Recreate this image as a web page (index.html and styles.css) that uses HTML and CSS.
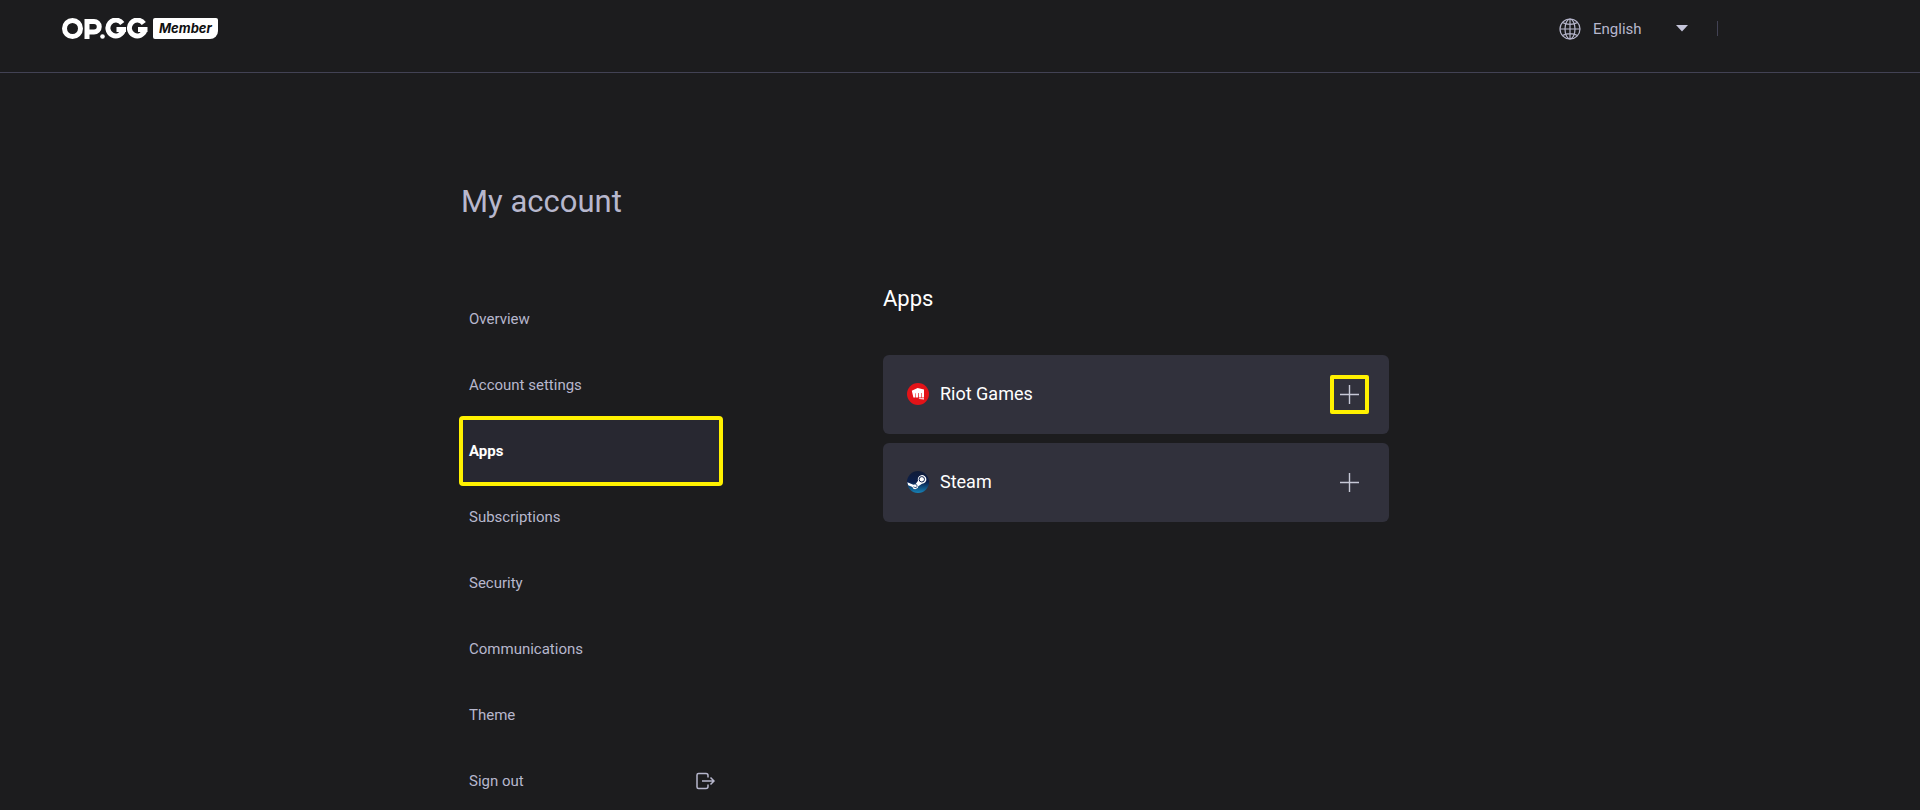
FILE: index.html
```html
<!DOCTYPE html>
<html lang="en">
<head>
<meta charset="utf-8">
<title>My account - OP.GG Member</title>
<meta name="viewport" content="width=device-width, initial-scale=1">
<link rel="stylesheet" href="styles.css">
</head>
<body>
<header class="header">
  <a class="logo" href="#" aria-label="OP.GG Member">
    <svg class="logo-mark" width="87" height="21" viewBox="0 0 87 21" fill="none" stroke="#fff" stroke-width="5" aria-hidden="true">
      <circle cx="10.500" cy="10.500" r="8"/>
      <path d="M25 21V3.500H32a4.700 4.700 0 0 1 0 10.500H27"/>
      <circle cx="40.500" cy="18.500" r="2.300" fill="#fff" stroke="none"/>
      <path d="M60.300 5.500A7.900 7.900 0 1 0 61.500 11.800M64 11.500H54.500"/>
      <path d="M81.800 5.500A7.900 7.900 0 1 0 83 11.800M85.500 11.500H76"/>
    </svg>
    <span class="logo-badge">Member</span>
  </a>
  <div class="header-tools">
    <label class="language">
      <svg width="22" height="22" viewBox="0 0 22 22" fill="none" stroke="#b7b7cd" stroke-width="1.200" aria-hidden="true">
        <circle cx="11" cy="11" r="10"/><ellipse cx="11" cy="11" rx="5" ry="10"/>
        <path d="M11 1v20M1 11h20M3.500 4.500C7.500 7 14.500 7 18.500 4.500M3.500 17.500C7.500 15 14.500 15 18.500 17.500"/>
      </svg>
      <select class="language-select" aria-label="Language"><option>English</option></select>
      <svg width="12" height="7" viewBox="0 0 12 7" aria-hidden="true"><path d="M0 0h12L6 6.500z" fill="#c5c5da"/></svg>
    </label>
  </div>
</header>
<main class="page">
  <h1 class="title">My account</h1>
  <div class="columns">
    <nav class="menu" aria-label="Account">
      <a class="menu-item" href="#">Overview</a>
      <a class="menu-item" href="#">Account settings</a>
      <a class="menu-item menu-item-active" href="#" aria-current="page">Apps</a>
      <a class="menu-item" href="#">Subscriptions</a>
      <a class="menu-item" href="#">Security</a>
      <a class="menu-item" href="#">Communications</a>
      <a class="menu-item" href="#">Theme</a>
      <a class="menu-item menu-item-last" href="#">Sign out
        <svg width="20" height="18" viewBox="0 0 20 18" fill="none" stroke="#b7b7cd" stroke-width="1.500" aria-hidden="true"><path d="M13 5.500V3.500A2 2 0 0 0 11 1.500H3.500A1.500 1.500 0 0 0 2 3v12A1.500 1.500 0 0 0 3.500 16.500H11a2 2 0 0 0 2-2V12.500M7 9H19M15.500 5.500L19 9L15.500 12.500"/></svg>
      </a>
    </nav>
    <section class="apps">
      <h2 class="apps-title">Apps</h2>
      <ul class="app-list">
        <li class="app">
          <svg width="22" height="22" viewBox="0 0 22 22" aria-hidden="true">
            <circle cx="11" cy="11" r="11" fill="#e31318"/>
            <path d="M4.800 7.800L10.600 5L17 6.600V14.500H14.800V10H14.200V14.500H12L11.700 10H11.100L11.200 14.500H9L8.600 10.200H8.100L8.400 14.500H6.400zM11.500 15.200H17V16.500L12.500 15.900z" fill="#fff"/>
          </svg>
          <span class="app-name">Riot Games</span>
          <button class="add add-highlight" type="button" aria-label="Add Riot Games"><svg width="19" height="19" viewBox="0 0 19 19" stroke="#c6c8d6" stroke-width="1.400" aria-hidden="true"><path d="M9.500 0v19M0 9.500h19"/></svg></button>
        </li>
        <li class="app">
          <svg width="22" height="22" viewBox="0 0 22 22" aria-hidden="true">
            <defs><linearGradient id="steam" x1="0" y1="0" x2="0" y2="1"><stop offset="0" stop-color="#101c38"/><stop offset=".5" stop-color="#0b1f4c"/><stop offset="1" stop-color="#1683b8"/></linearGradient></defs>
            <circle cx="11" cy="11" r="11" fill="url(#steam)"/>
            <path d="M.3 11.300L6.400 13.700L8.500 13.200L11 9.800A4.300 4.300 0 1 1 15 12.700L11.300 15.200A3 3 0 0 1 5.400 15.900L1.200 14.200z" fill="#fff"/>
            <circle cx="14.800" cy="8.300" r="2.700" fill="none" stroke="#0b1f4c"/>
            <path d="M6.400 15.800l1.300.6a1.600 1.600 0 1 0 .7-3" fill="none" stroke="#12366a" stroke-width=".8"/>
          </svg>
          <span class="app-name">Steam</span>
          <button class="add" type="button" aria-label="Add Steam"><svg width="19" height="19" viewBox="0 0 19 19" stroke="#c6c8d6" stroke-width="1.400" aria-hidden="true"><path d="M9.500 0v19M0 9.500h19"/></svg></button>
        </li>
      </ul>
    </section>
  </div>
</main>
</body>
</html>
```
FILE: styles.css
```css
* { box-sizing: border-box; }
body {
  margin: 0;
  background: #1c1c1e;
  color: #b7b7cd;
  font-family: Roboto, "Liberation Sans", sans-serif;
  font-size: 15px;
  line-height: 20px;
}
a { color: inherit; text-decoration: none; }
.header {
  display: flex;
  justify-content: space-between;
  align-items: flex-start;
  min-height: 73px;
  padding: 18px 202px 0 62px;
  border-bottom: 1px solid #424254;
}
.logo { display: flex; align-items: center; gap: 4px; }
.logo-mark { display: block; }
.logo-badge {
  padding: 0 6px;
  border-radius: 2px 2px 8px 2px;
  background: #fff;
  color: #111;
  font: italic 700 13px/21px Inter, sans-serif;
}
.header-tools { padding-top: 3px; }
.language {
  display: flex;
  align-items: center;
  height: 15px;
  padding-right: 29px;
  border-right: 1px solid #424254;
}
.language-select {
  width: 83px;
  margin-left: 12px;
  padding: 0;
  border: 0;
  appearance: none;
  background: none;
  color: inherit;
  font: inherit;
}
.page {
  max-width: 998px;
  margin: 0 auto;
  padding: 109px 70px 0 0;
}
.title {
  margin: 0;
  font-size: 31px;
  font-weight: 400;
  line-height: 40px;
}
.columns {
  display: flex;
  justify-content: space-between;
  gap: 40px;
  padding-top: 64px;
}
.menu { flex: 0 1 260px; }
.menu-item {
  display: flex;
  align-items: center;
  justify-content: space-between;
  height: 66px;
  padding: 0 6px 0 8px;
}
.menu-item-active {
  background: #282831;
  color: #fff;
  font-weight: 700;
  outline: 4px solid #fff100;
  outline-offset: -2px;
  border-radius: 2px;
}
.menu-item-last { height: 62px; padding-top: 4px; }
.apps { flex: 0 1 506px; color: #fff; }
.apps-title {
  margin: 0;
  font-size: 22px;
  font-weight: 400;
  line-height: 26px;
}
.app-list {
  display: grid;
  gap: 9px;
  margin: 0;
  padding: 43px 0 0;
  list-style: none;
}
.app {
  display: flex;
  align-items: center;
  gap: 11px;
  height: 79px;
  padding: 0 20px 1px 24px;
  border-radius: 6px;
  background: #31313c;
}
.app-name { flex: 1; font-size: 18px; line-height: 24px; }
.add {
  display: grid;
  place-items: center;
  width: 39px;
  height: 39px;
  padding: 0;
  border: 4px solid transparent;
  border-radius: 2px;
  background: none;
}
.add-highlight { border-color: #fff100; }
```
